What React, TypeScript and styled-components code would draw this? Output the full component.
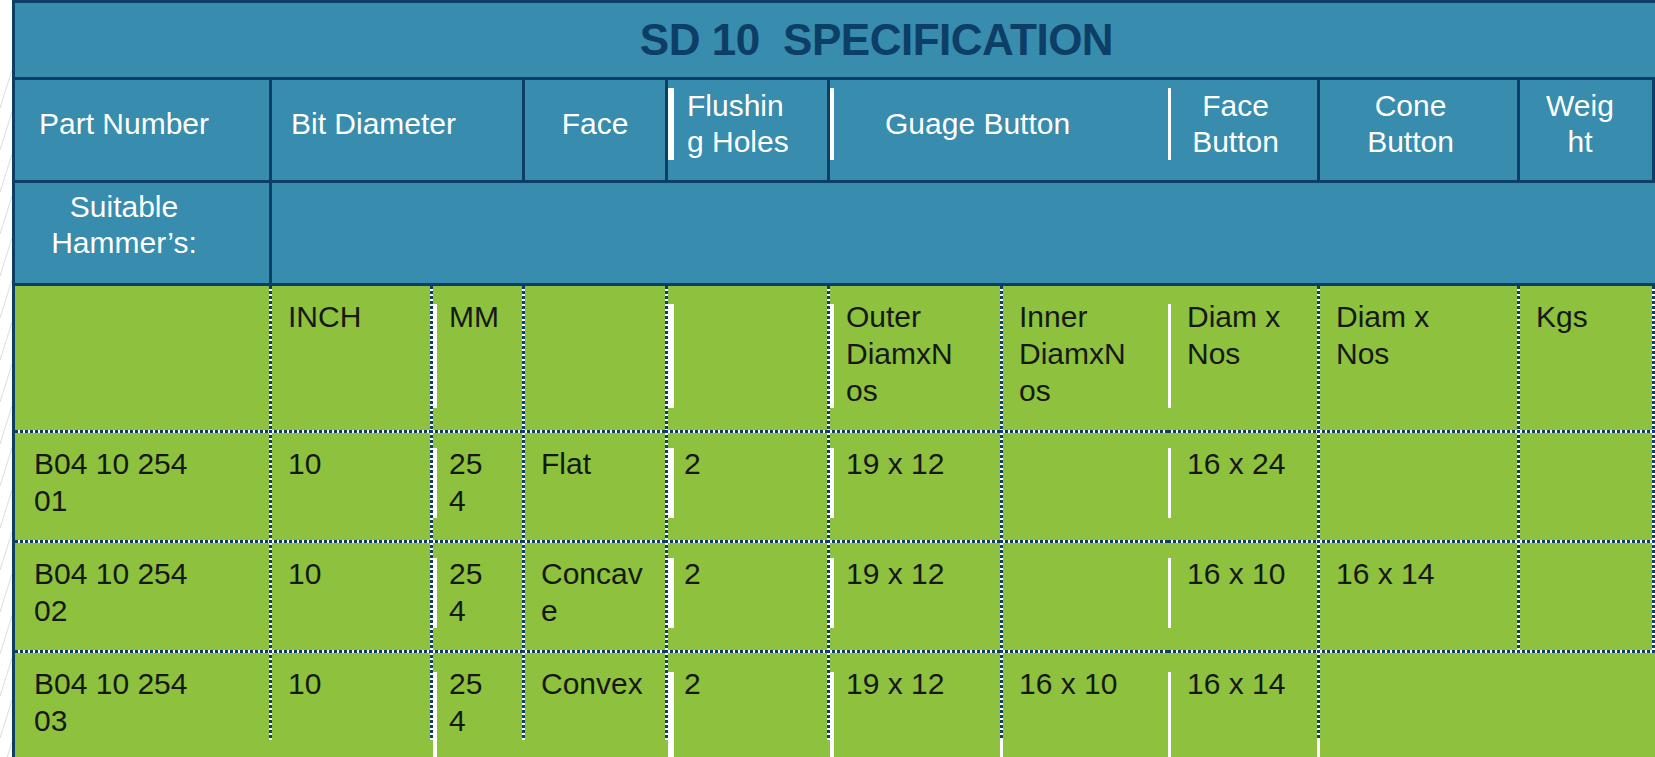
import React from 'react';
import styled, { createGlobalStyle } from 'styled-components';

const NAVY = '#0c3e66';
const BLUE = '#388cad';
const GREEN = '#8dc13e';
const INK = '#161913';

const vDots = `repeating-linear-gradient(to bottom, ${NAVY} 0 3px, #fff 3px 5px)`;
const hDots = `repeating-linear-gradient(to right, ${NAVY} 0 3px, #fff 3px 5px)`;
const white = 'linear-gradient(#fff, #fff)';

const GlobalStyle = createGlobalStyle`
  *, *::before, *::after { box-sizing: border-box; }
  html, body { margin: 0; padding: 0; background: #fff; }
  body {
    font-family: "Liberation Sans", Arial, sans-serif;
    overflow: hidden;
  }
`;

const Page = styled.div`
  display: flex;
  width: 1655px;
  height: 757px;
  overflow: hidden;
  background: #fff;
`;

const Margin = styled.div`
  flex: none;
  width: 12px;

  svg {
    display: block;
  }
`;

const Table = styled.div`
  flex: none;
  width: 1643px;
  border-left: 3px solid ${NAVY};
  border-top: 3px solid ${NAVY};
  display: grid;
  grid-template-columns: 254px 161px 92px 143px 162px 173px 168px 149px 200px 138px;
  grid-template-rows: 77px 103px 103px 144px 110px 110px 110px;
  align-content: start;
`;

const TitleBar = styled.div`
  grid-column: 1 / -1;
  display: flex;
  align-items: center;
  justify-content: center;
  padding-left: 83px;
  background: ${BLUE};
  border-bottom: 3px solid ${NAVY};
  color: ${NAVY};
  font-size: 44px;
  font-weight: bold;
  letter-spacing: -0.5px;
  white-space: pre;
`;

interface HeadProps {
  $span?: number;
  $line?: boolean;
  $edge?: boolean;
  $bar?: number;
  $align?: 'left' | 'center';
  $pl?: number;
  $pr?: number;
  $pb?: number;
}

const HeadCell = styled.div<HeadProps>`
  grid-column: span ${p => p.$span ?? 1};
  display: flex;
  align-items: center;
  justify-content: ${p => (p.$align === 'left' ? 'flex-start' : 'center')};
  text-align: ${p => p.$align ?? 'center'};
  padding: 0 ${p => p.$pr ?? 0}px ${p => p.$pb ?? 12}px ${p => p.$pl ?? 0}px;
  border-bottom: 3px solid ${NAVY};
  border-left: ${p => (p.$line ? `3px solid ${NAVY}` : 'none')};
  border-right: ${p => (p.$edge ? `3px solid ${NAVY}` : 'none')};
  background: ${p =>
    p.$bar ? `${white} 0 8px / ${p.$bar}px calc(100% - 28px) no-repeat, ` : ''}${BLUE};
  color: #fff;
  font-size: 30px;
  line-height: 36px;
  white-space: pre;
`;

interface GreenProps {
  $line?: boolean;
  $top?: boolean;
  $edge?: boolean;
  $bar?: number;
  $tail?: boolean;
  $last?: boolean;
}

const greenLayers = (p: GreenProps) => {
  const layers: string[] = [];
  const lineH = p.$last ? '90px' : '100%';
  if (p.$top) layers.push(`${hDots} 0 0 / 100% 3px no-repeat`);
  if (p.$line) layers.push(`${vDots} 0 0 / 3px ${lineH} no-repeat`);
  if (p.$edge) layers.push(`${vDots} 100% 0 / 3px ${lineH} no-repeat`);
  if (p.$bar) {
    const x = p.$line ? 3 : 0;
    layers.push(
      p.$last
        ? `${white} ${x}px 22px / ${p.$bar}px 100% no-repeat`
        : `${white} ${x}px 18px / ${p.$bar}px calc(100% - 40px) no-repeat`
    );
  } else if (p.$tail && p.$last) {
    layers.push(`${white} 0 90px / 3px 100% no-repeat`);
  }
  layers.push(GREEN);
  return layers.join(', ');
};

const GreenCell = styled.div<GreenProps>`
  padding: ${p => (p.$top ? 15 : 12)}px 0 0 19px;
  background: ${p => greenLayers(p)};
  color: ${INK};
  font-size: 30px;
  line-height: 37px;
  white-space: pre;
`;

interface Col {
  line?: boolean;
  bar?: number;
  tail?: boolean;
  edge?: boolean;
}

const cols: Col[] = [
  {},
  { line: true },
  { line: true, bar: 4 },
  { line: true },
  { line: true, bar: 6 },
  { line: true, bar: 4 },
  { line: true, tail: true },
  { bar: 3 },
  { line: true, tail: true },
  { line: true, edge: true },
];

const units = ['', 'INCH', 'MM', '', '', 'Outer\nDiamxN\nos', 'Inner\nDiamxN\nos', 'Diam x\nNos', 'Diam x\nNos', 'Kgs'];

const rows: string[][] = [
  ['B04 10 254\n01', '10', '25\n4', 'Flat', '2', '19 x 12', '', '16 x 24', '', ''],
  ['B04 10 254\n02', '10', '25\n4', 'Concav\ne', '2', '19 x 12', '', '16 x 10', '16 x 14', ''],
  ['B04 10 254\n03', '10', '25\n4', 'Convex', '2', '19 x 12', '16 x 10', '16 x 14', '', ''],
];

const MarginLines = () => (
  <svg width="12" height="757" viewBox="0 0 12 757">
    {Array.from({ length: 17 }, (_, i) => {
      const y = 70 + i * 42;
      return <line key={i} x1="0" y1={y + 38} x2="12" y2={y} stroke="#dcdcdc" strokeWidth="1" />;
    })}
  </svg>
);

export default function App() {
  return (
    <>
      <GlobalStyle />
      <Page>
        <Margin>
          <MarginLines />
        </Margin>
        <Table>
          <TitleBar>SD 10  SPECIFICATION</TitleBar>

          <HeadCell $pr={36}>Part Number</HeadCell>
          <HeadCell $span={2} $line $align="left" $pl={19}>Bit Diameter</HeadCell>
          <HeadCell $line>Face</HeadCell>
          <HeadCell $line $bar={6} $align="left" $pl={19}>{'Flushin\ng Holes'}</HeadCell>
          <HeadCell $span={2} $line $bar={4} $align="left" $pl={55}>Guage Button</HeadCell>
          <HeadCell $bar={3} $pr={14}>{'Face\nButton'}</HeadCell>
          <HeadCell $line $pr={16}>{'Cone\nButton'}</HeadCell>
          <HeadCell $line $edge $pr={12}>{'Weig\nht'}</HeadCell>

          <HeadCell $pr={36} $pb={16}>{'Suitable\nHammer\u2019s:'}</HeadCell>
          <HeadCell $span={9} $line />

          {units.map((text, i) => (
            <GreenCell key={`u${i}`} $line={cols[i].line} $bar={cols[i].bar} $edge={cols[i].edge}>
              {text}
            </GreenCell>
          ))}

          {rows.map((row, r) =>
            row.map((text, i) => {
              const last = r === rows.length - 1;
              const col = cols[i];
              const open = last && i === 9;
              return (
                <GreenCell
                  key={`r${r}c${i}`}
                  $top
                  $last={last}
                  $line={open ? false : col.line}
                  $edge={open ? false : col.edge}
                  $bar={col.bar}
                  $tail={col.tail}
                >
                  {text}
                </GreenCell>
              );
            })
          )}
        </Table>
      </Page>
    </>
  );
}
